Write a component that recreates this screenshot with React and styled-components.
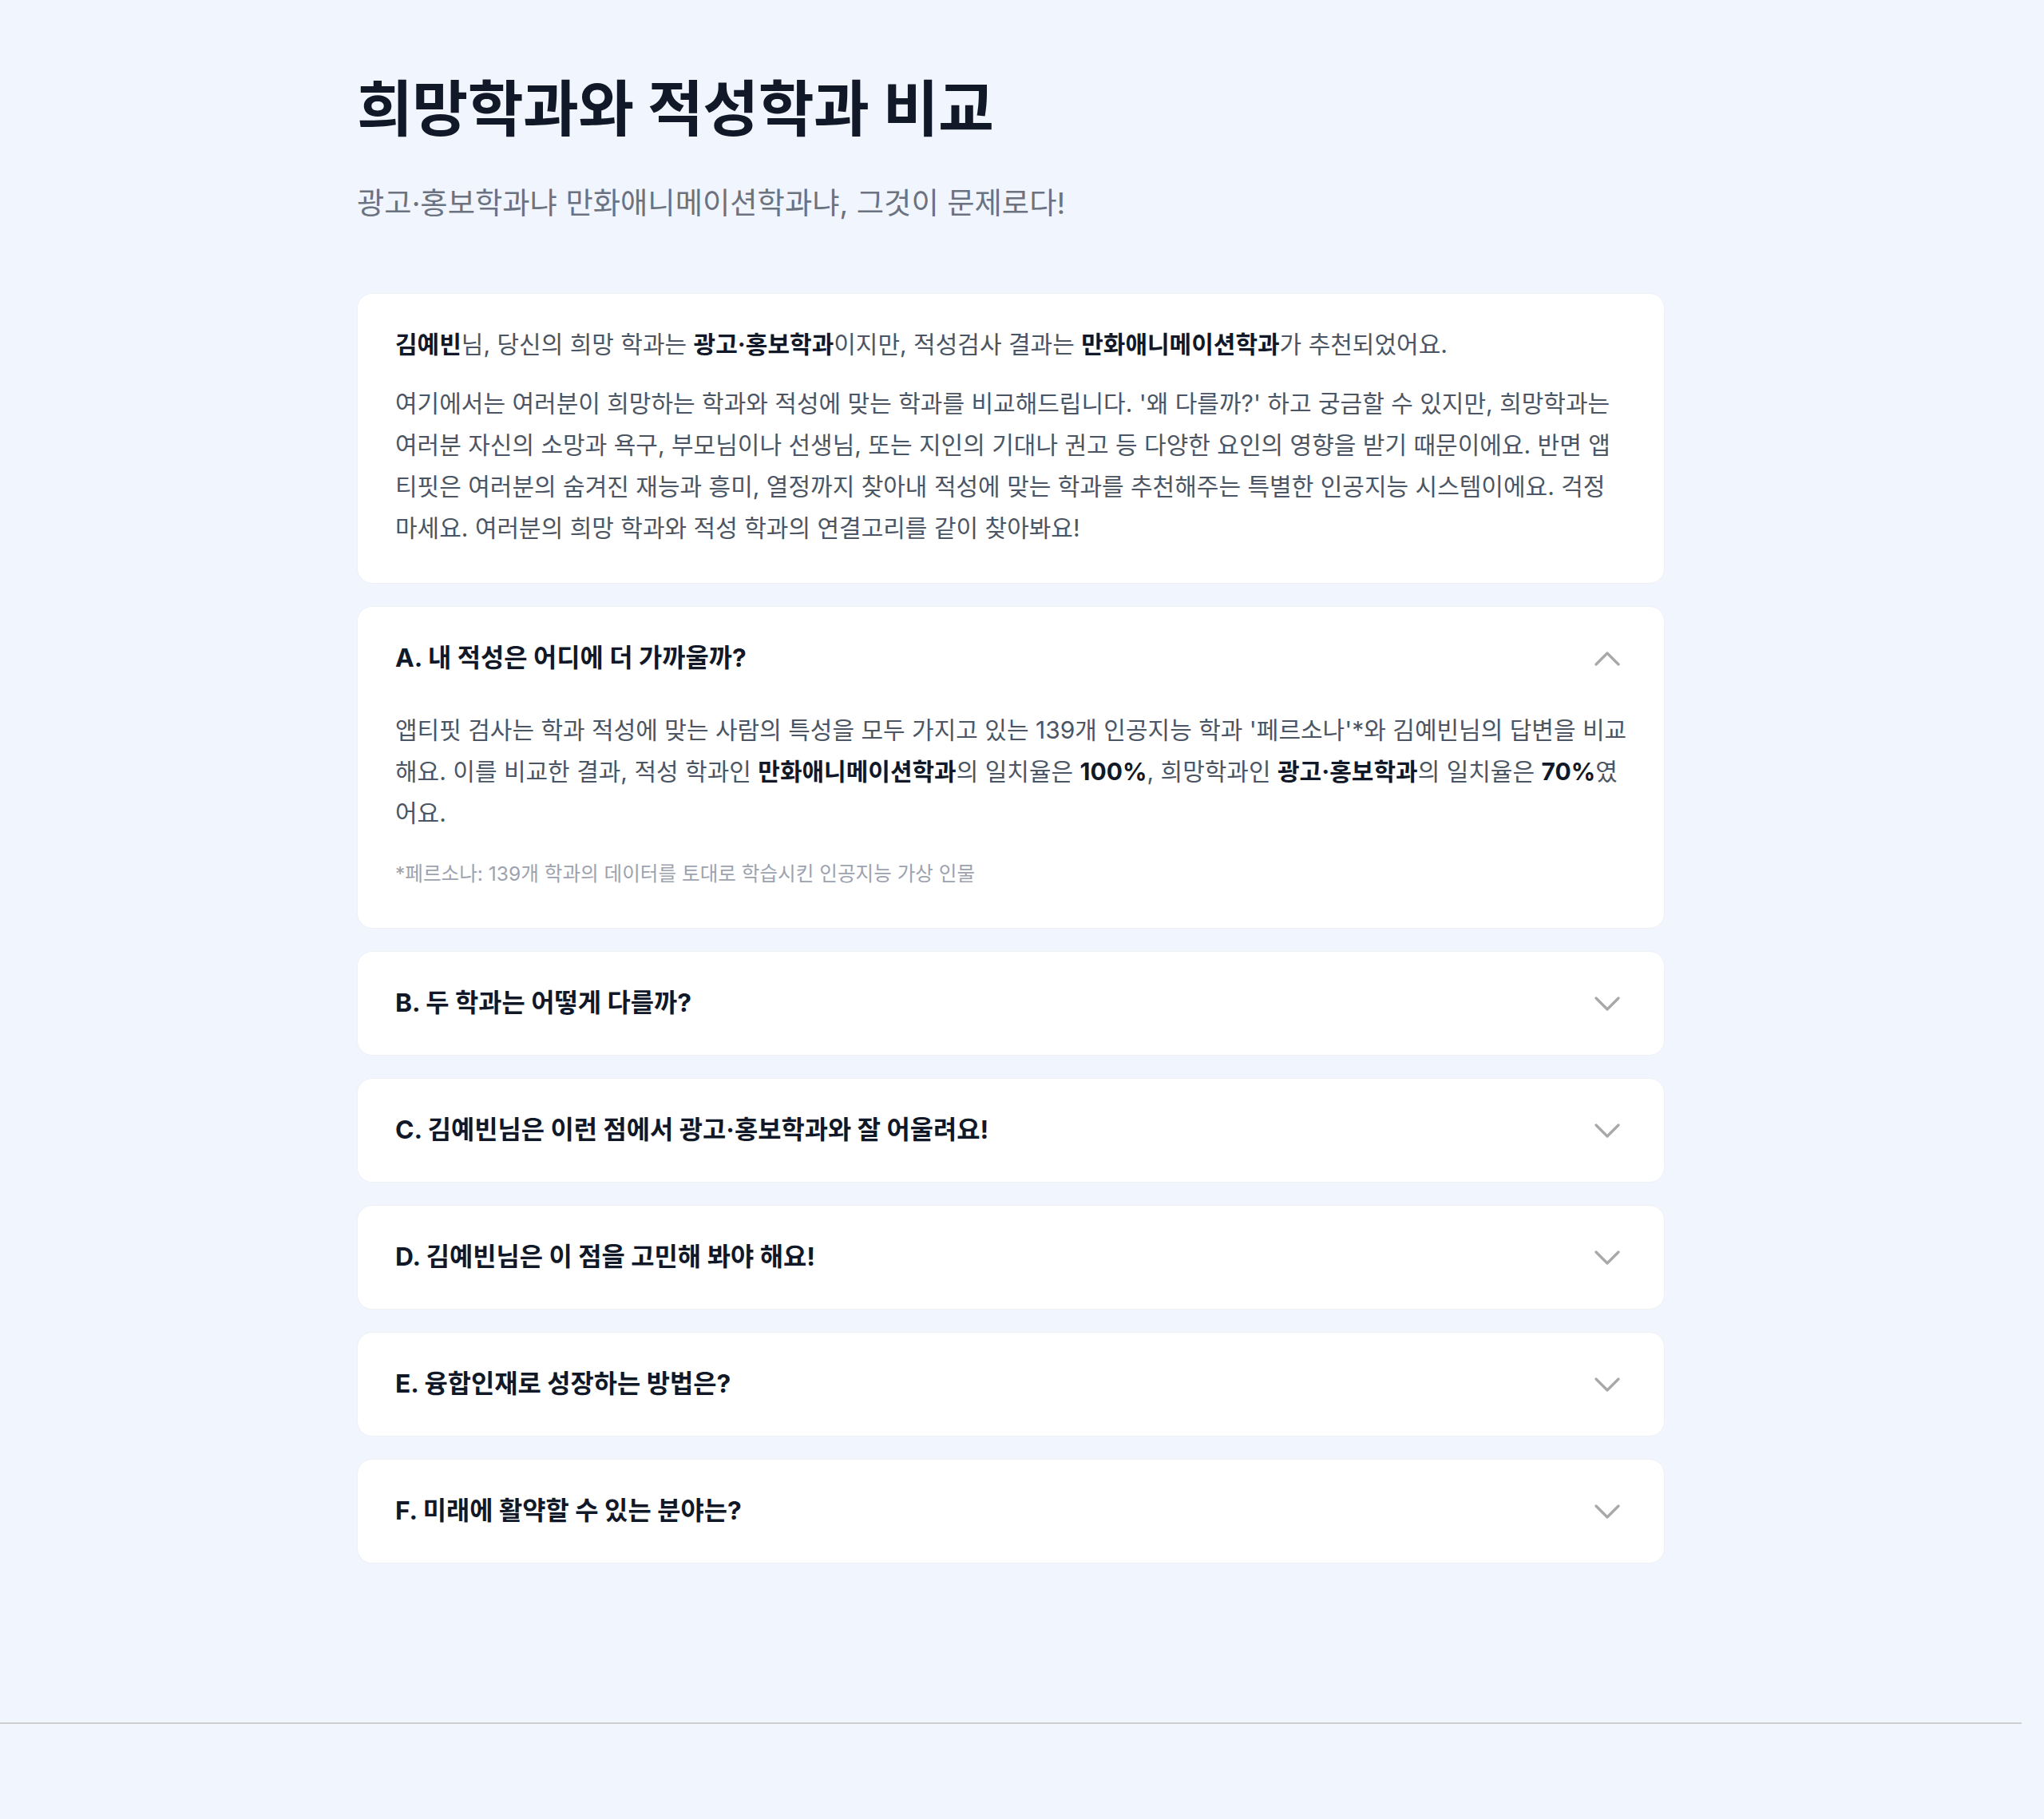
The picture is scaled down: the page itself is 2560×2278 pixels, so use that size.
import React, { useState } from "react";
import styled, { createGlobalStyle } from "styled-components";

const GlobalStyle = createGlobalStyle`
  html, body {
    margin: 0;
    padding: 0;
    background: #f1f5fe;
  }
  body {
    font-family: "Inter", "Noto Sans CJK KR", sans-serif;
    color: #4b5563;
  }
  * { box-sizing: border-box; }
`;

const Shell = styled.div`
  width: calc(100% - 28px);
  min-height: 2278px;
  display: flex;
  flex-direction: column;
`;

const Main = styled.main`
  width: 1638px;
  margin: 0 auto;
  padding: 90px 0 199px;
`;

const Header = styled.header`
  margin-bottom: 87px;
`;

const Title = styled.h1`
  margin: 0;
  font-size: 76px;
  line-height: 92px;
  font-weight: 700;
  color: #111827;
  letter-spacing: -0.6px;
`;

const Subtitle = styled.p`
  margin: 48px 0 0;
  font-size: 37.3px;
  line-height: 50px;
  font-weight: 400;
  color: #6b7280;
`;

const Stack = styled.div`
  display: flex;
  flex-direction: column;
  gap: 28px;
`;

const Card = styled.section`
  background: #ffffff;
  border: 1px solid #eef0f4;
  border-radius: 19px;
  padding: 43px 47px;
`;

const Lead = styled.p`
  margin: 0 0 28px;
  font-size: 30px;
  line-height: 40px;
  color: #4b5563;
  white-space: nowrap;
`;

const Paragraph = styled.p`
  margin: 0;
  font-size: 30px;
  line-height: 52px;
  color: #4b5563;
  white-space: nowrap;
`;

const Strong = styled.strong`
  font-weight: 700;
  color: #111827;
`;

const ItemHeader = styled.button`
  all: unset;
  box-sizing: border-box;
  width: 100%;
  display: flex;
  align-items: center;
  justify-content: space-between;
  height: 43px;
  cursor: pointer;
`;

const ItemTitle = styled.h2`
  margin: 0;
  font-size: 31.8px;
  line-height: 43px;
  font-weight: 700;
  color: #111827;
  transform: translateY(-1px);
`;

const Chevron = styled.svg`
  width: 32px;
  height: 18px;
  margin-right: 8px;
  flex: none;
  fill: none;
  stroke: #a8a8a8;
  stroke-width: 3.2;
  stroke-linecap: round;
  stroke-linejoin: round;
`;

const ItemBody = styled.div`
  padding-top: 42px;
  padding-bottom: 8px;
`;

const Footnote = styled.p`
  margin: 33px 0 0;
  font-size: 24.6px;
  line-height: 34px;
  color: #9ca3af;
`;

const Footer = styled.footer`
  border-top: 2px solid #cfcfcf;
  height: 120px;
`;

const items = [
  { id: "A", title: "A. 내 적성은 어디에 더 가까울까?" },
  { id: "B", title: "B. 두 학과는 어떻게 다를까?" },
  { id: "C", title: "C. 김예빈님은 이런 점에서 광고·홍보학과와 잘 어울려요!" },
  { id: "D", title: "D. 김예빈님은 이 점을 고민해 봐야 해요!" },
  { id: "E", title: "E. 융합인재로 성장하는 방법은?" },
  { id: "F", title: "F. 미래에 활약할 수 있는 분야는?" },
];

function ChevronIcon({ open }) {
  return (
    <Chevron viewBox="0 0 32 18" aria-hidden="true">
      {open ? <polyline points="2,16 16,2 30,16" /> : <polyline points="2,2 16,16 30,2" />}
    </Chevron>
  );
}

function BodyA() {
  return (
    <ItemBody>
      <Paragraph>
        앱티핏 검사는 학과 적성에 맞는 사람의 특성을 모두 가지고 있는 139개 인공지능 학과 '페르소나'*와 김예빈님의 답변을 비교
        <br />
        해요. 이를 비교한 결과, 적성 학과인 <Strong>만화애니메이션학과</Strong>의 일치율은 <Strong>100%</Strong>, 희망학과인 <Strong>광고·홍보학과</Strong>의 일치율은 <Strong>70%</Strong>였
        <br />
        어요.
      </Paragraph>
      <Footnote>*페르소나: 139개 학과의 데이터를 토대로 학습시킨 인공지능 가상 인물</Footnote>
    </ItemBody>
  );
}

export default function App() {
  const [open, setOpen] = useState("A");
  return (
    <>
      <GlobalStyle />
      <Shell>
        <Main>
          <Header>
            <Title>희망학과와 적성학과 비교</Title>
            <Subtitle>광고·홍보학과냐 만화애니메이션학과냐, 그것이 문제로다!</Subtitle>
          </Header>
          <Stack>
            <Card>
              <Lead>
                <Strong>김예빈</Strong>님, 당신의 희망 학과는 <Strong>광고·홍보학과</Strong>이지만, 적성검사 결과는 <Strong>만화애니메이션학과</Strong>가 추천되었어요.
              </Lead>
              <Paragraph>
                여기에서는 여러분이 희망하는 학과와 적성에 맞는 학과를 비교해드립니다. '왜 다를까?' 하고 궁금할 수 있지만, 희망학과는
                <br />
                여러분 자신의 소망과 욕구, 부모님이나 선생님, 또는 지인의 기대나 권고 등 다양한 요인의 영향을 받기 때문이에요. 반면 앱
                <br />
                티핏은 여러분의 숨겨진 재능과 흥미, 열정까지 찾아내 적성에 맞는 학과를 추천해주는 특별한 인공지능 시스템이에요. 걱정
                <br />
                마세요. 여러분의 희망 학과와 적성 학과의 연결고리를 같이 찾아봐요!
              </Paragraph>
            </Card>
            {items.map((item) => {
              const isOpen = open === item.id;
              return (
                <Card key={item.id}>
                  <ItemHeader onClick={() => setOpen(isOpen ? null : item.id)}>
                    <ItemTitle>{item.title}</ItemTitle>
                    <ChevronIcon open={isOpen} />
                  </ItemHeader>
                  {isOpen && item.id === "A" && <BodyA />}
                </Card>
              );
            })}
          </Stack>
        </Main>
        <Footer />
      </Shell>
    </>
  );
}
